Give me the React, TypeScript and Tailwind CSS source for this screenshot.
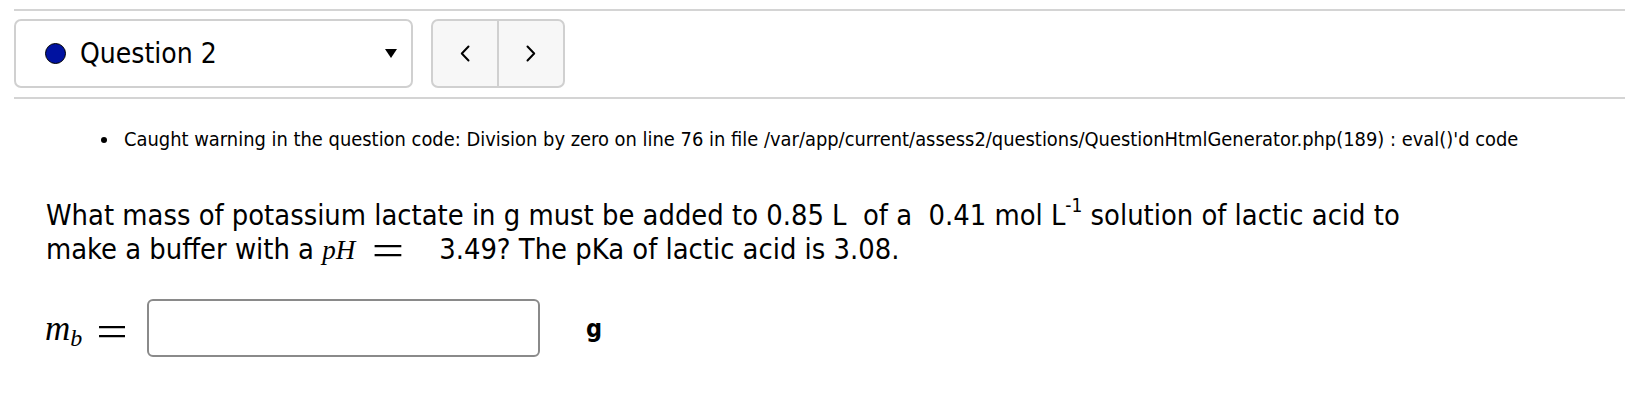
import React from 'react';

function Chevron({ dir }: { dir: 'left' | 'right' }) {
  return (
    <svg width="10" height="17" viewBox="0 0 10 17" fill="none">
      <path
        d={dir === 'left' ? 'M8.5 1.5 L1.8 8.5 L8.5 15.5' : 'M1.5 1.5 L8.2 8.5 L1.5 15.5'}
        stroke="#000"
        strokeWidth="2"
        strokeLinecap="round"
        strokeLinejoin="round"
      />
    </svg>
  );
}

export default function App() {
  return (
    <div className="w-[1625px] h-[406px] overflow-hidden bg-white text-black font-['DejaVu_Sans_Condensed','DejaVu_Sans',sans-serif]">
      {/* Question nav bar */}
      <div className="pl-[14px] pt-[9px]">
        <div className="h-[2px] bg-[#d4d4d4]" />
        <div className="mt-[8px] flex h-[69px] gap-[18px]">
          <div className="flex w-[399px] items-center rounded-[7px] border-2 border-[#d0d0d0] pl-[29px] pr-[14px]">
            <span className="h-[21px] w-[21px] rounded-full border-[1.5px] border-black bg-[#0012a0]" />
            <span className="ml-[14px] text-[28px] leading-none">Question 2</span>
            <svg className="ml-auto" width="12" height="9" viewBox="0 0 12 9">
              <path d="M0 0 H12 L6 9 Z" fill="#000" />
            </svg>
          </div>
          <div className="flex w-[134px] overflow-hidden rounded-[7px] border-2 border-[#d0d0d0] bg-[#f7f7f7]">
            <button className="flex flex-1 items-center justify-center">
              <Chevron dir="left" />
            </button>
            <div className="w-[2px] bg-[#d0d0d0]" />
            <button className="flex flex-1 items-center justify-center">
              <Chevron dir="right" />
            </button>
          </div>
        </div>
        <div className="mt-[9px] h-[2px] bg-[#d4d4d4]" />
      </div>

      {/* Warning */}
      <ul className="mt-[27px] list-disc pl-[120px] text-[19.9px] leading-[28px]">
        <li className="pl-[4px]">
          Caught warning in the question code: Division by zero on line 76 in file /var/app/current/assess2/questions/QuestionHtmlGenerator.php(189) : eval()'d code
        </li>
      </ul>

      {/* Question text */}
      <p className="mt-[44px] pl-[46px] text-[28.8px] leading-[34px] whitespace-nowrap">
        What mass of potassium lactate in g must be added to 0.85 L{'\u00a0'} of a {'\u00a0'}0.41 mol L
        <span className="relative top-[-13px] text-[19px] leading-none">-1</span> solution of lactic acid to
        <br />
        make a buffer with a{' '}
        <span className="font-['Liberation_Serif',serif] text-[27px] italic leading-[10px]">pH</span>
        <span className="relative top-[1px] ml-[20px] inline-block w-[26px] scale-x-[2.05] scale-y-[1.57] text-center font-['Liberation_Serif',serif] text-[28px] leading-[10px]">=</span>
        <span className="ml-[38px]">3.49? The pKa of lactic acid is 3.08.</span>
      </p>

      {/* Answer row */}
      <div className="mt-[33px] flex h-[58px] items-center pl-[45px]">
        <span className="w-[54px] font-['Liberation_Serif',serif] text-[35px] italic leading-none">
          m<span className="relative top-[6px] text-[24px] leading-none">b</span>
        </span>
        <span className="relative top-[3px] w-[26px] scale-x-[1.55] scale-y-[1.22] text-center font-['Liberation_Serif',serif] text-[36px] leading-none">=</span>
        <input
          type="text"
          className="ml-[22px] h-[58px] w-[393px] rounded-[6px] border-2 border-[#8a8a8a] bg-white outline-none"
        />
        <span className="ml-[46px] text-[25px] font-bold leading-none">g</span>
      </div>
    </div>
  );
}
